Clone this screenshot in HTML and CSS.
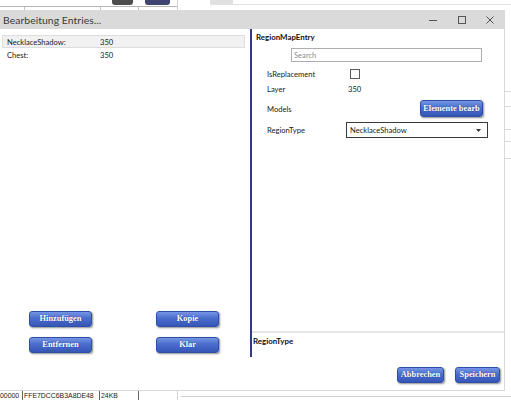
FILE: index.html
```html
<!DOCTYPE html>
<html>
<head>
<meta charset="utf-8">
<link rel="stylesheet" href="styles.css">
</head>
<body>
<div class="app">
  <div class="bg-top">
    <div class="bg-table">
      <div class="bg-row-a">
        <div class="bg-cell w24"></div>
        <div class="bg-cell w76"></div>
        <div class="bg-cell w38"><span class="bg-btn dark"></span></div>
        <div class="bg-cell w39"><span class="bg-btn navy"></span></div>
      </div>
      <div class="bg-row-b">
        <div class="bg-cell w24"></div>
        <div class="bg-cell w76 tick"></div>
        <div class="bg-cell w38 tick"></div>
        <div class="bg-cell w39 tick"></div>
      </div>
    </div>
    <div class="bg-right">
      <div class="bg-tabbar"><span class="bg-tab"></span></div>
    </div>
  </div>
  <div class="bg-mid">
    <div class="bg-strip">
      <div class="bg-gap g82"></div>
      <div class="bg-gap g15"></div>
      <div class="bg-gap g23"></div>
      <div class="bg-gap g12"></div>
      <div class="bg-gap g17"></div>
    </div>
  </div>
  <div class="bg-bottom">
    <div class="bg-btable">
      <div class="bg-bcell w22">00000</div>
      <div class="bg-bcell w77">FFE7DCC6B3A8DE48</div>
      <div class="bg-bcell w39b">24KB</div>
      <div class="bg-bcell w29"></div>
    </div>
    <div class="bg-bright"><div class="bg-bline"></div></div>
  </div>

  <div class="dialog">
    <div class="titlebar">
      <span class="title">Bearbeitung Entries...</span>
      <div class="controls">
        <span class="ctl"><svg width="8" height="8" viewBox="0 0 8 8"><line x1="0" y1="4.5" x2="8" y2="4.5" stroke="#555" stroke-width="1"/></svg></span>
        <span class="ctl"><svg width="8" height="8" viewBox="0 0 8 8"><rect x="0.5" y="0.5" width="7" height="7" fill="none" stroke="#555" stroke-width="1"/></svg></span>
        <span class="ctl"><svg width="8" height="8" viewBox="0 0 8 8"><path d="M0.5 0.5 L7.5 7.5 M7.5 0.5 L0.5 7.5" stroke="#555" stroke-width="1"/></svg></span>
      </div>
    </div>
    <div class="dlg-body">
      <div class="main">
        <div class="left">
          <div class="list">
            <div class="item selected"><span class="item-name">NecklaceShadow:</span><span>350</span></div>
            <div class="item"><span class="item-name">Chest:</span><span>350</span></div>
          </div>
          <div class="left-buttons">
            <button class="btn w63">Hinzufügen</button>
            <button class="btn w63">Kopie</button>
            <button class="btn w63">Entfernen</button>
            <button class="btn w63">Klar</button>
          </div>
        </div>
        <div class="right">
          <div class="props">
            <div class="props-head">RegionMapEntry</div>
            <div class="search">Search</div>
            <div class="prop r-check"><span class="plabel">IsReplacement</span><span class="checkbox"></span></div>
            <div class="prop r-layer"><span class="plabel">Layer</span><span>350</span></div>
            <div class="prop r-models"><span class="plabel">Models</span><button class="btn w63 edit">Elemente bearb</button></div>
            <div class="prop r-type"><span class="plabel">RegionType</span>
              <div class="select"><span>NecklaceShadow</span><svg width="5" height="3" viewBox="0 0 5 3"><path d="M0 0 H5 L2.5 3 Z" fill="#333"/></svg></div>
            </div>
          </div>
          <div class="desc">RegionType</div>
        </div>
      </div>
      <div class="footer">
        <button class="btn w47">Abbrechen</button>
        <button class="btn w45">Speichern</button>
      </div>
    </div>
  </div>
</div>
</body>
</html>
```
FILE: styles.css
```css
* { box-sizing: border-box; }
html, body { margin: 0; padding: 0; background: #fff; }
body { font-family: Lato, "Open Sans", sans-serif; color: #222; }
.app { position: relative; width: 511px; height: 400px; overflow: hidden; display: flex; flex-direction: column; background: #fff; }

/* background app */
.bg-top { height: 10px; display: flex; }
.bg-table { width: 178px; border-right: 1px solid #d4d4d4; display: flex; flex-direction: column; }
.bg-row-a { height: 6px; display: flex; }
.bg-row-b { height: 4px; display: flex; border-top: 1px solid #b8b8b8; }
.bg-cell { flex: none; height: 100%; }
.w24 { width: 24px; }
.w76 { width: 76px; }
.w38 { width: 38px; }
.w39 { width: 39px; }
.tick { border-left: 1px solid #c4c4c4; }
.bg-btn { display: block; height: 5px; border-radius: 0 0 3px 3px; }
.bg-btn.dark { margin-left: 12px; width: 21px; background: #4d4d4d; }
.bg-btn.navy { margin-left: 7px; width: 25px; background: #3f4470; }
.bg-right { flex: 1; padding-left: 32px; }
.bg-tabbar { height: 5px; border-bottom: 1px solid #e2e2e2; }
.bg-tab { display: block; width: 23px; height: 4px; background: #e0e0e0; }

.bg-mid { flex: 1; display: flex; justify-content: flex-end; }
.bg-strip { width: 6px; display: flex; flex-direction: column; }
.bg-gap { border-bottom: 1px solid #d8d8d8; }
.g82 { height: 82px; }
.g15 { height: 15px; }
.g23 { height: 23px; }
.g12 { height: 12px; }
.g17 { height: 17px; }

.bg-bottom { height: 10px; display: flex; }
.bg-btable { display: flex; width: 167px; border-top: 1px solid #666; font-family: "Liberation Sans", sans-serif; font-size: 6.9px; line-height: 9px; color: #222; }
.bg-bcell { flex: none; border-right: 1px solid #666; padding-left: 1px; overflow: hidden; white-space: nowrap; }
.bg-bcell.w22 { width: 23px; padding-left: 0; }
.bg-bcell.w77 { width: 77px; }
.bg-bcell.w39b { width: 39px; }
.bg-bcell.w29 { width: 28px; border-right: none; }
.bg-bright { flex: 1; margin-left: 10px; border-left: 1px solid #d0d0d0; padding-left: 3px; }
.bg-bline { margin-top: 6px; border-top: 1px solid #d0d0d0; }

/* dialog */
.dialog { position: absolute; left: 0; top: 10px; width: 505px; height: 381px; background: #fff; border-right: 1px solid #d9d9d9; border-bottom: 1px solid #d9d9d9; display: flex; flex-direction: column; }
.titlebar { height: 19px; flex: none; background: #dadada; display: flex; align-items: center; padding-left: 3px; }
.title { font-size: 10.4px; color: #3a3a3a; letter-spacing: 0.05px; }
.controls { margin-left: auto; display: flex; }
.ctl { width: 29px; height: 19px; display: flex; align-items: center; justify-content: center; }
.ctl:last-child { width: 28px; }

.dlg-body { flex: 1; display: flex; flex-direction: column; }
.main { height: 328px; flex: none; display: flex; }
.left { width: 250px; flex: none; display: flex; flex-direction: column; padding: 6px 5px 4px 2px; font-size: 7.6px; }
.list { flex: 1; }
.item { height: 13px; display: flex; align-items: center; padding-left: 4px; border: 1px solid transparent; }
.item.selected { background: #f1f1f1; border-color: #dddddd; }
.item-name { width: 93px; }
.left-buttons { display: grid; grid-template-columns: 63px 63px; column-gap: 64px; row-gap: 10px; padding-left: 27px; }

.btn { height: 16px; padding: 0; border: 1px solid #2f4ea6; border-radius: 3px; background: linear-gradient(#7596e4, #4a6dcc 45%, #3656b8); color: #fff; font-family: "Liberation Serif", serif; font-weight: bold; font-size: 8.4px; line-height: 14px; text-align: center; white-space: nowrap; overflow: hidden; box-shadow: 1px 1px 2px rgba(0,0,0,0.45); text-shadow: 0 0 1px #1d3583; }
.w63 { width: 63px; }
.w47 { width: 47px; }
.w45 { width: 45px; }

.right { flex: 1; border-left: 2px solid #363683; display: flex; flex-direction: column; font-size: 7.6px; }
.props { flex: 1; padding-top: 2px; }
.props-head { height: 12px; line-height: 12px; padding-left: 4px; font-weight: bold; font-size: 7.9px; color: #111; }
.search { margin: 5px 0 0 39px; width: 191px; height: 14px; border: 1px solid #abadb3; color: #8c8c8c; line-height: 12px; padding-left: 2px; }
.prop { display: flex; align-items: center; padding-left: 15px; }
.plabel { width: 81px; flex: none; color: #222; }
.r-check { margin-top: 5px; height: 14px; }
.r-layer { margin-top: 1px; height: 14px; }
.r-models { margin-top: 4px; height: 17px; }
.r-type { margin-top: 5px; height: 16px; }
.checkbox { width: 10px; height: 10px; border: 1px solid #5a5a5a; margin-left: 2px; background: #fff; }
.edit { margin-left: auto; margin-right: 21px; height: 17px; }
.select { margin-left: -2px; width: 142px; height: 16px; border: 1px solid #3a3a3a; display: flex; align-items: center; justify-content: space-between; padding: 0 6px 0 3px; }
.desc { height: 26px; flex: none; border-top: 2px solid #e6e6e6; padding: 2px 0 0 1px; line-height: 12px; font-weight: bold; font-size: 7.9px; color: #111; }

.footer { flex: 1; display: flex; justify-content: flex-end; align-items: flex-start; gap: 11px; padding: 10px 4px 0 0; }
```
